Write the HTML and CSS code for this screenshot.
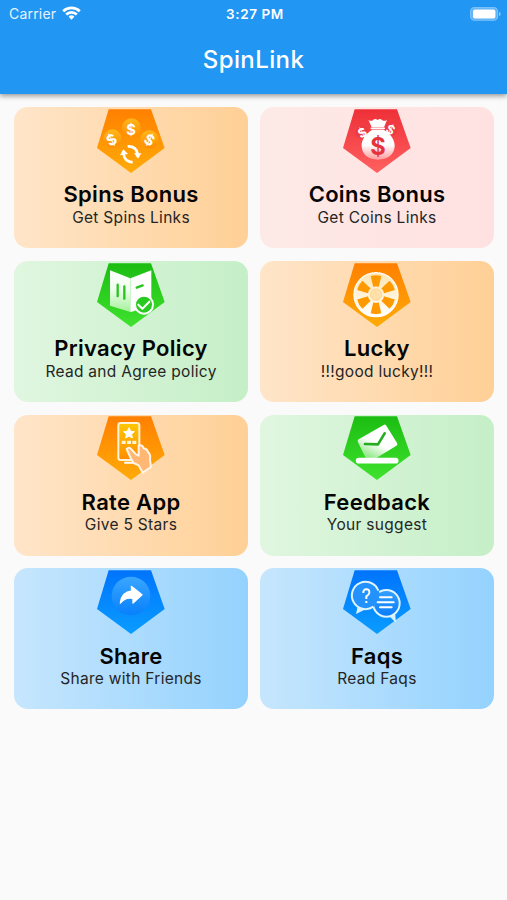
FILE: index.html
```html
<!DOCTYPE html>
<html lang="en">
<head>
<meta charset="utf-8">
<title>SpinLink</title>
<link rel="stylesheet" href="styles.css">
</head>
<body>
<svg class="defs" width="0" height="0" aria-hidden="true">
  <defs>
    <linearGradient id="orange" x1="0" y1="0" x2="0" y2="1"><stop offset="0" stop-color="#ff8000"/><stop offset="1" stop-color="#ffab08"/></linearGradient>
    <linearGradient id="red" x1="0" y1="0" x2="0" y2="1"><stop offset="0" stop-color="#ee3038"/><stop offset="1" stop-color="#ff6060"/></linearGradient>
    <linearGradient id="green" x1="0" y1="0" x2="0" y2="1"><stop offset="0" stop-color="#1bbd12"/><stop offset="1" stop-color="#40e22e"/></linearGradient>
    <linearGradient id="blue" x1="0" y1="0" x2="0" y2="1"><stop offset="0" stop-color="#0074fc"/><stop offset="1" stop-color="#0a9cff"/></linearGradient>
    <linearGradient id="coin" x1="0" y1="0" x2="0" y2="1"><stop offset="0" stop-color="#ffb81c"/><stop offset="1" stop-color="#ff8c00"/></linearGradient>
    <linearGradient id="bag" x1="0" y1="0" x2="0" y2="1"><stop offset="0" stop-color="#fff"/><stop offset=".5" stop-color="#fff"/><stop offset="1" stop-color="#ff9c9c"/></linearGradient>
    <linearGradient id="page" x1="0" y1="0" x2="0" y2="1"><stop offset="0" stop-color="#fff"/><stop offset=".45" stop-color="#f0ffee"/><stop offset="1" stop-color="#a4f09a"/></linearGradient>
    <linearGradient id="envelope" gradientUnits="userSpaceOnUse" x1="145" y1="70" x2="105" y2="150"><stop offset="0" stop-color="#fff"/><stop offset=".45" stop-color="#fff"/><stop offset="1" stop-color="#8fe986"/></linearGradient>
    <linearGradient id="hub" x1="0" y1="0" x2="0" y2="1"><stop offset="0" stop-color="#ffe5b0"/><stop offset="1" stop-color="#fff"/></linearGradient>
    <linearGradient id="phone" x1="0" y1="0" x2="0" y2="1"><stop offset="0" stop-color="#ffc800"/><stop offset="1" stop-color="#ff8c00"/></linearGradient>
    <linearGradient id="disc" x1="0" y1="0" x2="0" y2="1"><stop offset="0" stop-color="#3aa6ff"/><stop offset="1" stop-color="#0780fc"/></linearGradient>
    <linearGradient id="bubble" x1="0" y1="0" x2="0" y2="1"><stop offset="0" stop-color="#36a0ff"/><stop offset="1" stop-color="#0a7cf8"/></linearGradient>
    <path id="pentagon" d="M57 26H184L225 142L124 217L22 142Z"/>
  </defs>
</svg>

<header class="app-bar">
  <div class="status">
    <div class="carrier">Carrier
      <svg class="wifi" viewBox="0 0 19 14" width="19" height="14"><g fill="none" stroke="#fff" stroke-width="2.7"><path d="M1.2 5.2a12 12 0 0 1 16.6 0"/><path d="M4.2 8.5a7.6 7.6 0 0 1 10.6 0"/></g><path fill="#fff" d="M6.6 10.8a4.1 4.1 0 0 1 5.8 0L9.5 13.7z"/></svg>
    </div>
    <div class="time">3:27 PM</div>
    <svg class="battery" viewBox="0 0 31 14" width="31" height="14"><rect x=".6" y=".6" width="27" height="12.6" rx="3.8" fill="#5fb3f7" stroke="#7cc1f9" stroke-width="1.1"/><rect x="3" y="2.5" width="22.4" height="8.9" rx="2" fill="#fff"/><path d="M29 4.7q1.7.7 1.7 2.3T29 9.3z" fill="#8cc8fa"/></svg>
  </div>
  <h1>SpinLink</h1>
</header>

<main class="grid">
  <section class="card orange">
    <svg class="icon" viewBox="4 22 240 200">
      <use href="#pentagon" fill="url(#orange)"/>
      <circle cx="68" cy="113" r="27" fill="url(#coin)"/><circle cx="179" cy="116" r="27" fill="url(#coin)"/><circle cx="125" cy="81" r="28" fill="url(#coin)"/>
      <g class="coin-text" font-size="44"><text x="124" y="102">$</text><text transform="translate(66 118) rotate(-28)" y="15">$</text><text transform="translate(179 118) rotate(28)" y="15">$</text></g>
      <g fill="none" stroke="#fff" stroke-width="8"><path d="M102 160Q104 182 129 185"/><path d="M114 137Q140 136 144 160"/></g>
      <path fill="#fff" d="M91 164L101 146L115 160ZM133 158H155L145 174Z"/>
    </svg>
    <h2>Spins Bonus</h2><p>Get Spins Links</p>
  </section>

  <section class="card pink">
    <svg class="icon" viewBox="4 22 240 200">
      <use href="#pentagon" fill="url(#red)"/>
      <circle cx="80" cy="95" r="20" fill="#e93b43"/><circle cx="165" cy="86" r="20" fill="#e93b43"/>
      <path fill="url(#bag)" d="M110 87H144C163 98 178 116 177 137C176 163 154 177 127 177S79 163 78 137C77 116 91 99 110 87Z"/>
      <path fill="#fff" d="M98 57Q106 64 113 57Q119 52 126 58Q133 52 139 58Q146 63 154 58L145 80H108Z"/>
      <path d="M107 83H146" stroke="#fff" stroke-width="5" stroke-linecap="round"/>
      <g class="coin-text" font-size="38"><text transform="translate(80 96) rotate(-28)" y="14">$</text><text transform="translate(165 87) rotate(28)" y="14">$</text></g>
      <text class="coin-text bag-text" x="127" y="162" font-size="71">$</text>
    </svg>
    <h2>Coins Bonus</h2><p>Get Coins Links</p>
  </section>

  <section class="card green">
    <svg class="icon" viewBox="4 22 240 200">
      <use href="#pentagon" fill="url(#green)"/>
      <g transform="translate(0 4)">
      <path fill="url(#page)" d="M61 43L122 67V168L61 149Z"/><path fill="#fff" d="M122 67L185 43V143L132 166L122 168Z"/>
      <path d="M84 86V121M104 91V128M141 95L159 88" fill="none" stroke="#28c51e" stroke-width="7" stroke-linecap="round"/>
      <circle cx="163" cy="146" r="27" fill="#28ca1f" stroke="#fff" stroke-width="6"/>
      <path d="M146 146L158 158L179 137" fill="none" stroke="#fff" stroke-width="6" stroke-linecap="round" stroke-linejoin="round"/>
      </g>
    </svg>
    <h2>Privacy Policy</h2><p>Read and Agree policy</p>
  </section>

  <section class="card orange">
    <svg class="icon" viewBox="4 22 240 200">
      <use href="#pentagon" fill="url(#orange)"/>
      <g transform="translate(121 120)">
        <circle r="66" fill="url(#hub)" stroke="#fff" stroke-width="4"/>
        <g fill="#ff9900">
          <path id="slot" d="M-16 -56Q0 -61 16 -56L8 -23Q0 -27 -8 -23Z"/>
          <use href="#slot" transform="rotate(60)"/><use href="#slot" transform="rotate(120)"/><use href="#slot" transform="rotate(180)"/><use href="#slot" transform="rotate(240)"/><use href="#slot" transform="rotate(300)"/>
        </g>
        <circle r="17" fill="#ffe0a8" stroke="#ffcd80" stroke-width="2"/>
      </g>
    </svg>
    <h2>Lucky</h2><p>!!!good lucky!!!</p>
  </section>

  <section class="card orange">
    <svg class="icon" viewBox="4 22 240 200">
      <use href="#pentagon" fill="url(#orange)"/>
      <g transform="translate(0 2)">
      <rect x="86" y="44" width="63" height="111" rx="7" fill="url(#phone)" stroke="#fff4d8" stroke-width="6"/>
      <path fill="#fff" stroke="#fff" stroke-width="3" stroke-linejoin="round" d="M118 58L123 69L134 70L126 78L128 89L118 83L108 89L110 78L102 70L113 69Z"/>
      <path d="M96 102H108M112 102H124M128 102H140" stroke="#fff4cf" stroke-width="10"/>
      <path d="M106 163H132" stroke="#fff" stroke-width="6" stroke-linecap="round"/>
      <path fill="#ffb873" stroke="#fff4e7" stroke-width="6" stroke-linejoin="round" d="M111 122Q117 115 124 122L139 138L147 142V112Q158 107 162 120Q172 121 175 131Q184 138 181 155L184 176L159 193L147 171L132 164L123 149Z"/>
      </g>
    </svg>
    <h2>Rate App</h2><p>Give 5 Stars</p>
  </section>

  <section class="card green">
    <svg class="icon" viewBox="4 22 240 200">
      <use href="#pentagon" fill="url(#green)"/>
      <g transform="translate(0 2)">
      <path fill="url(#envelope)" stroke="url(#envelope)" stroke-width="12" stroke-linejoin="round" d="M72 98L147 55L179 107L120 143H94Z"/>
      <path d="M88 107L127 108L147 75" fill="none" stroke="#25ad1f" stroke-width="8" stroke-linecap="round" stroke-linejoin="round"/>
      <path d="M69 157H180" stroke="#fff" stroke-width="17" stroke-linecap="round"/>
      </g>
    </svg>
    <h2>Feedback</h2><p>Your suggest</p>
  </section>

  <section class="card blue">
    <svg class="icon" viewBox="4 22 240 200">
      <use href="#pentagon" fill="url(#blue)"/>
      <circle cx="124" cy="103" r="58" fill="url(#disc)"/>
      <path fill="#fff" stroke="#fff" stroke-width="4" stroke-linejoin="round" d="M125 74L157 99L130 124V110Q107 105 92 124Q96 91 126 88Z"/>
    </svg>
    <h2>Share</h2><p>Share with Friends</p>
  </section>

  <section class="card blue">
    <svg class="icon" viewBox="4 22 240 200">
      <use href="#pentagon" fill="url(#blue)"/>
      <g transform="translate(0 3)">
      <path fill="#d7f1ff" d="M67 127L61 154L90 140ZM158 158L181 180L178 148Z"/>
      <circle cx="152" cy="122" r="40" fill="url(#bubble)" stroke="#dff4ff" stroke-width="6"/>
      <circle cx="91" cy="98" r="41" fill="#2492fc"/>
      <path d="M128 84A41 41 0 1 0 113 132" fill="none" stroke="#dff4ff" stroke-width="6"/>
      <path d="M83 91Q82 80 92 80Q102 80 101 90Q100 97 92 101V109M92 115V121" fill="none" stroke="#fff" stroke-width="6"/>
      <path d="M133 104H168M126 119H174M133 134H168" stroke="#fff" stroke-width="6" stroke-linecap="round"/>
      </g>
    </svg>
    <h2>Faqs</h2><p>Read Faqs</p>
  </section>
</main>
</body>
</html>
```
FILE: styles.css
```css
* { box-sizing: border-box; }
body {
  margin: 0;
  min-height: 900px;
  background: #fafafa;
  font-family: Inter, "Liberation Sans", sans-serif;
  color: #050505;
}
.defs { display: block; }
.app-bar {
  height: 94px;
  background: #2196f3;
  color: #fff;
  box-shadow: 0 2px 5px rgba(0, 0, 0, .4);
}
.status {
  display: grid;
  grid-template-columns: 1fr auto 1fr;
  align-items: center;
  height: 27px;
  padding: 0 6px 0 9px;
}
.carrier {
  display: flex;
  align-items: center;
  gap: 6px;
  font-size: 14px;
  letter-spacing: .2px;
  color: #e5f4ff;
}
.wifi { margin-top: -2px; }
.time { font-size: 13.5px; font-weight: 600; letter-spacing: .6px; }
.battery { justify-self: end; }
h1 {
  margin: 17px 0 0;
  font-size: 24px;
  line-height: 32px;
  font-weight: 500;
  letter-spacing: .4px;
  text-align: center;
}
.grid {
  display: grid;
  grid-template-columns: 1fr 1fr;
  grid-auto-rows: 141px;
  gap: 12.7px;
  padding: 13.4px 13.4px 0 14.4px;
}
.card {
  display: flex;
  flex-direction: column;
  align-items: center;
  border-radius: 14px;
  overflow: hidden;
}
.orange { background: linear-gradient(90deg, #ffe5c9, #ffd096); }
.pink { background: linear-gradient(90deg, #fdeae6, #ffe1e1); }
.green { background: linear-gradient(90deg, #e0f6e0, #c5efc7); }
.blue { background: linear-gradient(90deg, #c6e6fd, #94d2fe); }
.icon { width: 80px; height: 66.7px; margin-top: .5px; flex: none; }
.coin-text {
  fill: #fff;
  font-family: Inter, sans-serif;
  font-weight: 700;
  text-anchor: middle;
}
.bag-text { fill: #e5333c; }
h2 {
  margin: 6.9px 0 0;
  font-size: 22px;
  line-height: 27px;
  font-weight: 600;
  letter-spacing: .3px;
}
p {
  margin: .4px 0 0;
  font-size: 15.5px;
  line-height: 18px;
  letter-spacing: .3px;
  color: #252525;
}
```
